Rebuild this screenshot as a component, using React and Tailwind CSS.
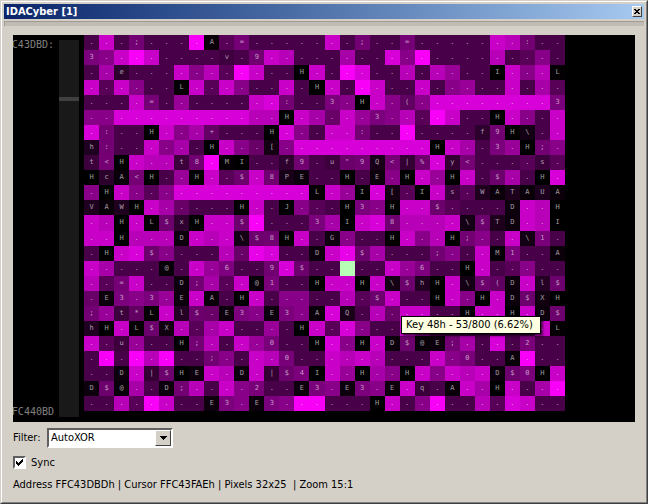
import React, { useState } from "react";

// One token per byte. A printable byte is written as itself; any other byte
// is written as "<shade>." where the shade is the high nibble of byte ^ KEY.
const KEY = 0x48;
const CURSOR = { row: 15, col: 17 };
const ROWS = [
  "4. c. 4. ; 4. 4. 4. f. A 5. = 4. 4. 4. 4. 4. c. 4. ; 4. 4. = 4. 4. 4. 4. 4. c. b. : 4. 4.",
  "3 8. c. f. c. 4. 4. 4. 4. v 4. 9 c. b. 4. 4. 4. a. 4. 4. d. 8. f. 4. 4. 4. 4. b. 4. 5. 8. 4.",
  "4. a. e 4. 4. 4. c. 8. b. 5. f. c. 4. 4. H c. 4. f. d. 4. 4. b. 4. b. 9. 4. 4. I c. 8. b. L",
  "c. 5. c. 8. 4. 4. L c. 5. c. 8. 4. 4. c. 4. H c. 4. f. c. 4. 4. c. 4. 8. 9. 4. 4. c. 4. a. 5.",
  "4. 4. 4. c. = 4. 9. 4. 4. 4. 4. c. d. : 4. 4. 3 8. H c. 8. ( 8. d. d. d. d. d. d. d. d. 3",
  "8. 8. d. d. d. d. d. d. d. d. d. b. b. H c. a. 6. c. 9. 3 8. b. 5. f. c. 4. 4. H c. 8. 4. c.",
  "d. : 4. 4. H c. 8. a. + 4. 4. 4. H d. 8. 4. c. c. : 4. 4. f. 4. 4. 4. 4. f 9 H \\ 4. c.",
  "h : 4. 4. c. 8. a. 4. H c. 8. 6. [ 8. d. d. d. d. d. d. d. d. d. H c. a. 4. 3 9. H ; 8.",
  "t < H c. b. b. t 8 f. M I 4. 4. f 9 4. u \" 9 Q < | % d. y < 4. 4. 4. 5. s 5.",
  "H c A < H 4. 9. H c. 5. $ c. 8 P E 4. 4. H 4. E 8. H c. 9. H c. 4. $ a. 4. H d.",
  "8. H c. 8. 5. 8. d. d. d. d. d. d. d. d. d. L c. 9. I d. [ 5. I c. s 5. W A T A U A",
  "V A W H c. a. 6. 4. 4. 4. H c. 4. J 8. 5. 4. H 3 8. H c. c. $ 5. 4. 4. 4. D c. b. H",
  "c. b. H c. L $ x H c. c. $ f. 4. 4. 4. 3 a. I c. d. 8 b. b. b. c. \\ $ T D c. b. I",
  "c. c. H b. b. b. D c. b. c. \\ $ 8 H c. 4. G 8. 4. 4. H c. 8. b. H ; 8. 4. c. \\ 1 4.",
  "4. H c. d. $ 8. 4. 4. 4. b. 6. e. d. 4. 4. D c. e. $ a. 4. 4. 4. ; 8. 4. c. M 1 4. 4. A",
  "c. a. 4. 4. 4. @ 4. c. 9. 6 4. 4. 9 d. $ 4. 4. 4. 4. 4. c. 9. 6 4. 4. H c. 4. 5. 8. 4. 4.",
  "b. 5. = c. 4. 4. D ; a. 5. c. @ 1 4. 4. H c. c. H c. \\ $ h H c. \\ $ ( D c. l $",
  "6. E 3 8. 3 9. E c. A 4. H c. 4. 8. 8. 4. 4. b. 5. $ c. 4. 4. H c. 8. H c. D $ X H",
  "; 9. t * L c. l $ 6. E 3 8. E 3 8. A d. Q 4. b. 6. c. c. 4. 4. H c. c. H c. D $",
  "h H c. L $ X b. 5. a. c. 4. 4. 9. 4. H c. 5. d. 8. 4. 4. c. 8. 4. 4. 4. 4. 4. 4. 4. c. L",
  "c. 5. u 9. 4. 4. H ; b. 4. c. 9. 0 4. 4. H d. 8. H c. D $ @ E ; a. 4. d. 4. 2 4. 4.",
  "4. f. 4. f. b. f. 4. 4. ; 8. 4. c. b. 0 4. 4. c. b. c. b. 4. 4. 4. c. 8. 0 4. 4. A f. 4. 4.",
  "4. 4. D c. | $ H E c. b. D c. | $ 4 I c. 9. H a. 8. H c. 8. c. b. c. D $ 0 H c.",
  "D $ @ a. 4. D ; b. 4. c. 8. 2 4. 4. E 3 8. E 3 8. E c. q 4. A c. a. H c. 4. a. f.",
  "4. 4. b. 5. f. c. 4. 4. E 3 8. E 3 8. f. f. 4. 4. 4. H c. 4. 8. f. 4. 4. b. 5. d. c. 4. 4.",
].map((row) => row.split(" "));

function cellOf(token) {
  const printable = token.length === 1;
  const level = printable ? token.charCodeAt(0) ^ KEY : parseInt(token[0], 16) * 16 + 8;
  return { glyph: printable ? token : ".", color: `rgb(${level}, 0, ${level})` };
}

function Cell({ token, selected }) {
  const { glyph, color } = cellOf(token);
  return (
    <span
      className="block overflow-hidden text-center text-[7px] leading-[14px] text-white/60"
      style={{ backgroundColor: selected ? "#b7ffb7" : color }}
    >
      {glyph}
    </span>
  );
}

function TitleBar() {
  return (
    <header className="flex h-[15px] items-center justify-between bg-linear-to-r from-[#0a246a] to-[#a6caf0] px-[2px]">
      <h1 className="text-[11px] leading-[15px] font-bold text-white">IDACyber [1]</h1>
      <button
        type="button"
        aria-label="Close"
        className="flex h-[11px] w-[10px] items-center justify-center border border-t-white border-r-[#404040] border-b-[#404040] border-l-white bg-[#d4d0c8]"
      >
        <svg width="6" height="5" viewBox="0 0 6 5" shapeRendering="crispEdges" aria-hidden="true">
          <path d="M0 0h2v1h2v-1h2v1h-1v1h-1v1h1v1h1v1h-2v-1h-2v1h-2v-1h1v-1h1v-1h-1v-1h-1z" fill="#000" />
        </svg>
      </button>
    </header>
  );
}

function HexView() {
  return (
    <section className="relative flex h-[387px] overflow-hidden bg-black font-['DejaVu_Sans_Mono','Liberation_Mono',monospace]">
      <div className="flex w-[41px] flex-col justify-between py-1 text-[10px] leading-3 text-[#808080]">
        <span className="flex justify-end">C43DBD:</span>
        <span className="flex justify-end">FC440BD</span>
      </div>
      <div className="m-[5px] w-[20px] shrink-0 bg-[#191919] pt-[57px]">
        <div className="h-1 bg-[#404040]" />
      </div>
      <div className="grid h-[376px] w-[481px] shrink-0 grid-cols-[repeat(32,minmax(0,1fr))] grid-rows-[repeat(25,minmax(0,1fr))]">
        {ROWS.map((row, r) =>
          row.map((token, c) => (
            <Cell key={`${r}-${c}`} token={token} selected={r === CURSOR.row && c === CURSOR.col} />
          ))
        )}
      </div>
      <div
        role="tooltip"
        className="absolute top-[281px] left-[388px] border border-black bg-[#ffffe1] pr-[7px] pl-1 font-['DejaVu_Sans_Condensed','DejaVu_Sans',sans-serif] text-[11px] leading-4 whitespace-nowrap text-black shadow-[2px_2px_2px_rgba(0,0,0,0.6)]"
      >
        Key 48h - 53/800 (6.62%)
      </div>
    </section>
  );
}

export default function App() {
  const [filter, setFilter] = useState("AutoXOR");
  const [sync, setSync] = useState(true);
  return (
    <main className="flex min-h-screen flex-col border border-t-[#d4d0c8] border-r-[#404040] border-b-[#404040] border-l-[#d4d0c8] bg-[#d4d0c8] font-['DejaVu_Sans_Condensed','DejaVu_Sans',sans-serif] text-[11px] text-black">
      <div className="flex grow flex-col border border-t-white border-r-[#808080] border-b-[#808080] border-l-white px-[2px] pt-[2px]">
        <TitleBar />
        <div className="mt-[2px] h-[5px] border-t border-l border-[#a09c94] bg-[#c0bcb4]" />
        <div className="px-[9px] pt-[9px]">
          <HexView />
          <div className="mt-[6px] flex items-center">
            <label htmlFor="filter" className="w-[34px] whitespace-nowrap">Filter:</label>
            <div className="relative">
              <select
                id="filter"
                value={filter}
                onChange={(e) => setFilter(e.target.value)}
                className="block h-[20px] w-[126px] appearance-none border-2 border-t-[#606060] border-r-white border-b-white border-l-[#606060] bg-white pl-[2px] text-[11px] leading-4"
              >
                <option>AutoXOR</option>
              </select>
              <span className="pointer-events-none absolute top-[2px] right-[2px] flex h-[16px] w-[16px] items-center justify-center border border-t-white border-r-[#404040] border-b-[#404040] border-l-white bg-[#d4d0c8]">
                <svg width="7" height="4" viewBox="0 0 7 4" shapeRendering="crispEdges" aria-hidden="true">
                  <path d="M0 0h7v1h-1v1h-1v1h-1v1h-1v-1h-1v-1h-1v-1h-1z" fill="#000" />
                </svg>
              </span>
            </div>
          </div>
          <label className="mt-[6px] flex items-center gap-[5px] leading-[17px]">
            <span className="relative flex">
              <input
                type="checkbox"
                checked={sync}
                onChange={(e) => setSync(e.target.checked)}
                className="h-[13px] w-[13px] appearance-none border-2 border-t-[#606060] border-r-white border-b-white border-l-[#606060] bg-white"
              />
              {sync && (
                <svg className="pointer-events-none absolute top-[3px] left-[3px]" width="7" height="7" viewBox="0 0 7 7" shapeRendering="crispEdges" aria-hidden="true">
                  <path d="M0 2h1v1h1v1h1v-1h1v-1h1v-1h1v-1h1v3h-1v1h-1v1h-1v1h-1v1h-1v-1h-1v-1h-1z" fill="#000" />
                </svg>
              )}
            </span>
            Sync
          </label>
          <p className="mt-[6px] leading-4 whitespace-pre-wrap">Address FFC43DBDh | Cursor FFC43FAEh | Pixels 32x25  | Zoom 15:1</p>
        </div>
      </div>
    </main>
  );
}
